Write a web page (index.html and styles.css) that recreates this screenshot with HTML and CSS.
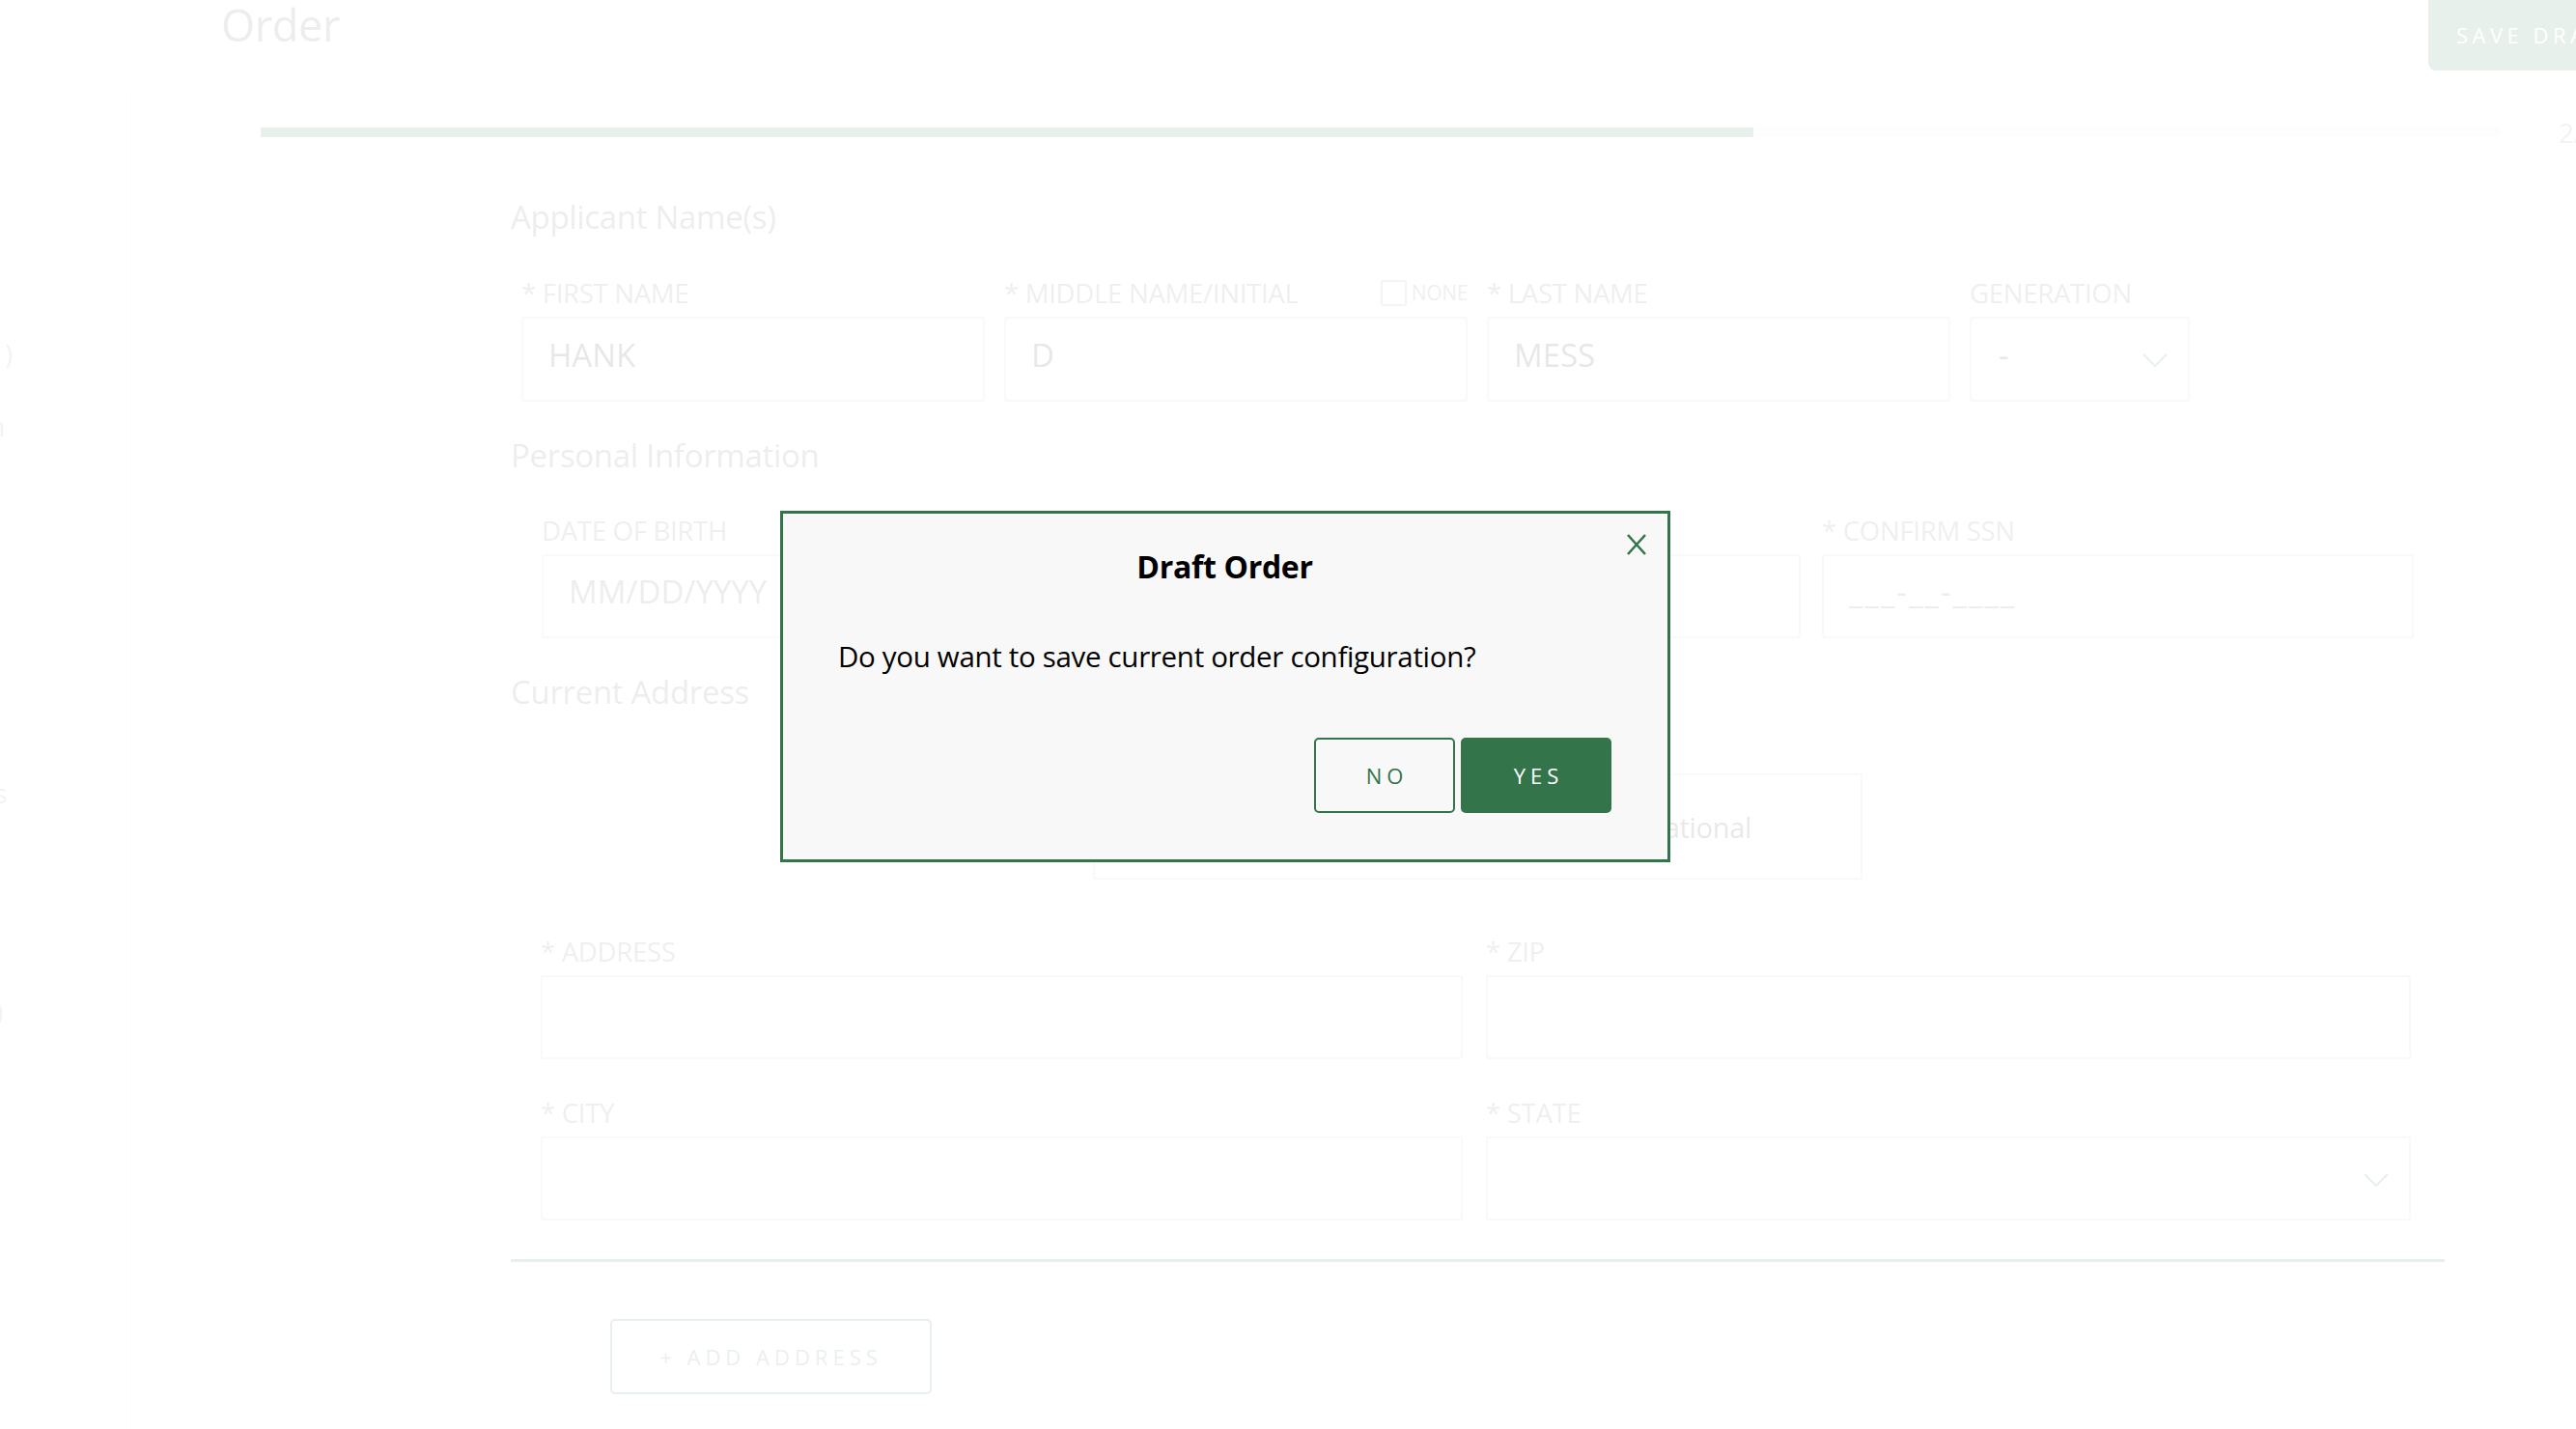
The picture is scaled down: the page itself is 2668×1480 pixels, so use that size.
FILE: index.html
```html
<!DOCTYPE html>
<html lang="en">
<head>
    <meta charset="UTF-8">
    <title>Order</title>
    <link rel="stylesheet" href="styles.css">
</head>
<body>
    <div class="page">
        <aside class="sidebar">
            <div class="step step-1">Applicant Name(s)</div>
            <div class="step step-2">Personal Information</div>
            <div class="step step-3">Current Address</div>
            <div class="step step-4">Previous Address(es)</div>
        </aside>

        <main class="content">
            <header class="top-bar">
                <h1>Order</h1>
                <button class="save-draft">Save Draft</button>
            </header>

            <div class="progress-row">
                <div class="progress"><div class="progress-fill" style="width: 66.67%"></div></div>
                <span class="step-count">2/3</span>
            </div>

            <form class="order-form">
                <h2>Applicant Name(s)</h2>
                <div class="row row-names">
                    <div class="field">
                        <div class="label-line"><label>* First Name</label></div>
                        <input type="text" value="HANK">
                    </div>
                    <div class="field">
                        <div class="label-line">
                            <label>* Middle Name/Initial</label>
                            <span class="none-check"><span class="box"></span>None</span>
                        </div>
                        <input type="text" value="D">
                    </div>
                    <div class="field">
                        <div class="label-line"><label>* Last Name</label></div>
                        <input type="text" value="MESS">
                    </div>
                    <div class="field">
                        <div class="label-line"><label>Generation</label></div>
                        <div class="select">
                            <select><option>-</option></select>
                            <svg class="chevron" width="28" height="16" viewBox="0 0 28 16"><polyline points="2,2 14,14 26,2" fill="none" stroke="#33744a" stroke-width="2"/></svg>
                        </div>
                    </div>
                </div>

                <h2>Personal Information</h2>
                <div class="row row-personal">
                    <div class="field">
                        <div class="label-line"><label>Date of Birth</label></div>
                        <input type="text" placeholder="MM/DD/YYYY">
                    </div>
                    <div class="field">
                        <div class="label-line"><label>* SSN</label></div>
                        <input type="text" class="ssn" placeholder="___-__-____">
                    </div>
                    <div class="field">
                        <div class="label-line"><label>* Confirm SSN</label></div>
                        <input type="text" class="ssn" placeholder="___-__-____">
                    </div>
                </div>

                <h2>Current Address</h2>
                <div class="toggle">
                    <span>Domestic</span>
                    <span>International</span>
                </div>
                <div class="row row-address">
                    <div class="field">
                        <div class="label-line"><label>* Address</label></div>
                        <input type="text">
                    </div>
                    <div class="field">
                        <div class="label-line"><label>* Zip</label></div>
                        <input type="text">
                    </div>
                </div>
                <div class="row row-address row-city">
                    <div class="field">
                        <div class="label-line"><label>* City</label></div>
                        <input type="text">
                    </div>
                    <div class="field">
                        <div class="label-line"><label>* State</label></div>
                        <div class="select">
                            <select><option></option></select>
                            <svg class="chevron" width="28" height="16" viewBox="0 0 28 16"><polyline points="2,2 14,14 26,2" fill="none" stroke="#33744a" stroke-width="2"/></svg>
                        </div>
                    </div>
                </div>
                <hr class="divider">
                <button type="button" class="add-address">+ Add Address</button>
            </form>
        </main>
    </div>

    <div class="backdrop"></div>
    <div class="modal" role="dialog">
        <button class="modal-close" aria-label="Close">
            <svg width="24" height="24" viewBox="0 0 24 24"><path d="M3 2 L21 22 M21 2 L3 22" stroke="#33744a" stroke-width="2.6" fill="none"/></svg>
        </button>
        <h3 class="modal-title">Draft Order</h3>
        <p class="modal-text">Do you want to save current order configuration?</p>
        <div class="modal-actions">
            <button class="btn-no">No</button>
            <button class="btn-yes">Yes</button>
        </div>
    </div>
</body>
</html>
```

FILE: styles.css
```css
body {
    margin: 0;
    width: 2668px;
    height: 1480px;
    overflow: hidden;
    background: #fff;
    font-family: "Open Sans", "Liberation Sans", sans-serif;
    letter-spacing: -0.02em;
    color: #5e5e5e;
}
.page {
    display: flex;
    align-items: flex-start;
}

/* sidebar, almost entirely scrolled off to the left */
.sidebar {
    flex: none;
    width: 130px;
    height: 1388px;
    margin-top: 92px;
    border-right: 1px solid #e3e3e3;
    display: flex;
    flex-direction: column;
    font-size: 28px;
    line-height: 30px;
    color: #7f9488;
}
.step {
    display: flex;
    justify-content: flex-end;
    width: 6px;
    overflow: hidden;
    white-space: nowrap;
}
.step-1 { margin: 259px 0 0 4px; width: 9px; }
.step-2 { margin-top: 45px; width: 5px; }
.step-3 { margin-top: 350px; width: 7px; }
.step-4 { margin-top: 196px; width: 3px; }

.content {
    flex: none;
    width: 2624px;
}
.top-bar {
    display: flex;
    justify-content: space-between;
    align-items: flex-start;
    height: 73px;
}
.top-bar h1 {
    margin: 0 0 0 98px;
    font-size: 45px;
    line-height: 52px;
    font-weight: 400;
}
.save-draft {
    width: 240px;
    height: 80px;
    margin-top: -7px;
    padding: 5px 0 0 29px;
    text-align: left;
    background: #33744a;
    color: #fff;
    border: none;
    border-radius: 8px;
    font: inherit;
    font-size: 22px;
    letter-spacing: 4.5px;
    text-transform: uppercase;
}

.progress-row {
    display: flex;
    align-items: center;
    height: 10px;
    margin-top: 59px;
    padding-left: 139px;
}
.progress {
    width: 2319px;
    height: 10px;
    background: #e6e6e6;
}
.progress-fill {
    height: 100%;
    background: #33744a;
}
.step-count {
    margin-left: 61px;
    font-size: 28px;
    line-height: 10px;
    color: #7f9488;
}

.order-form {
    margin-left: 398px;
    width: 2003px;
}
.order-form h2 {
    margin: 63px 0 0;
    font-size: 33px;
    line-height: 40px;
    font-weight: 400;
}
.row {
    display: grid;
}
.row-names {
    margin: 43px 0 0 11px;
    grid-template-columns: 480px 480px 480px 228px;
    column-gap: 20px;
}
.row-personal {
    margin: 42px 0 0 32px;
    grid-template-columns: 669px 613px 613px;
    column-gap: 22px;
}
.row-names + h2, .row-personal + h2 {
    margin-top: 36px;
}
.row-address {
    margin: 59px 0 0 31px;
    grid-template-columns: 955px 958px;
    column-gap: 24px;
}
.row-city {
    margin-top: 40px;
}
.label-line {
    display: flex;
    justify-content: space-between;
    align-items: flex-end;
    height: 30px;
    margin-bottom: 10px;
    font-size: 27.6px;
    line-height: 30px;
    text-transform: uppercase;
    color: #6b6b6b;
}
.none-check {
    display: flex;
    align-items: center;
    gap: 5px;
    font-size: 21px;
    line-height: 30px;
}
.none-check .box {
    width: 23px;
    height: 23px;
    border: 2px solid #9a9a9a;
    border-radius: 2px;
}
.field input, .select select {
    box-sizing: border-box;
    width: 100%;
    height: 88px;
    margin: 0;
    padding: 0 26px 10px;
    border: 2px solid #cbcbcb;
    border-radius: 2px;
    background: #fff;
    font: inherit;
    font-size: 33px;
    color: #2a2a2a;
    outline: none;
}
.row-personal input, .row-address input, .row-address select {
    height: 87px;
}
.field input::placeholder {
    color: #5e5e5e;
}
.field input.ssn {
    letter-spacing: 2px;
}
.select {
    position: relative;
}
.select select {
    appearance: none;
    -webkit-appearance: none;
    padding-left: 28px;
}
.chevron {
    position: absolute;
    top: 37px;
    right: 22px;
}

.toggle {
    display: grid;
    grid-template-columns: 1fr 1fr;
    box-sizing: border-box;
    width: 797px;
    height: 110px;
    margin: 64px 0 0 603px;
    border: 2px solid #cbcbcb;
    border-radius: 2px;
    font-size: 29px;
    color: #333;
}
.toggle span {
    display: flex;
    align-items: center;
    justify-content: center;
}

.divider {
    height: 3px;
    margin: 40px 0 0;
    border: none;
    background: #33744a;
}
.add-address {
    display: block;
    width: 333px;
    height: 78px;
    margin: 59px 0 0 103px;
    border: 2px solid #33744a;
    border-radius: 5px;
    background: #fff;
    color: #33744a;
    font: inherit;
    font-size: 22px;
    letter-spacing: 5px;
    text-transform: uppercase;
}

/* modal */
.backdrop {
    position: fixed;
    inset: 0;
    background: rgba(255, 255, 255, 0.89);
}
.modal {
    position: fixed;
    left: 808px;
    top: 529px;
    width: 922px;
    box-sizing: border-box;
    padding: 35px 58px 48px 57px;
    border: 3px solid #33744a;
    background: #f8f8f8;
    color: #000;
}
.modal-close {
    position: absolute;
    top: 20px;
    right: 20px;
    width: 24px;
    height: 24px;
    padding: 0;
    border: none;
    background: none;
}
.modal-close svg {
    display: block;
}
.modal-title {
    margin: 0;
    text-align: center;
    font-size: 32px;
    line-height: 40px;
    font-weight: 700;
}
.modal-text {
    margin: 53px 0 0;
    font-size: 29.5px;
    line-height: 40px;
}
.modal-actions {
    display: flex;
    justify-content: flex-end;
    gap: 6px;
    margin-top: 64px;
}
.modal-actions button {
    box-sizing: border-box;
    height: 78px;
    padding: 0 0 0 5px;
    border-radius: 5px;
    font: inherit;
    font-size: 22px;
    letter-spacing: 5px;
    text-transform: uppercase;
}
.btn-no {
    width: 146px;
    border: 2px solid #33744a;
    background: transparent;
    color: #33744a;
}
.btn-yes {
    width: 156px;
    border: none;
    background: #33744a;
    color: #fff;
}
```
